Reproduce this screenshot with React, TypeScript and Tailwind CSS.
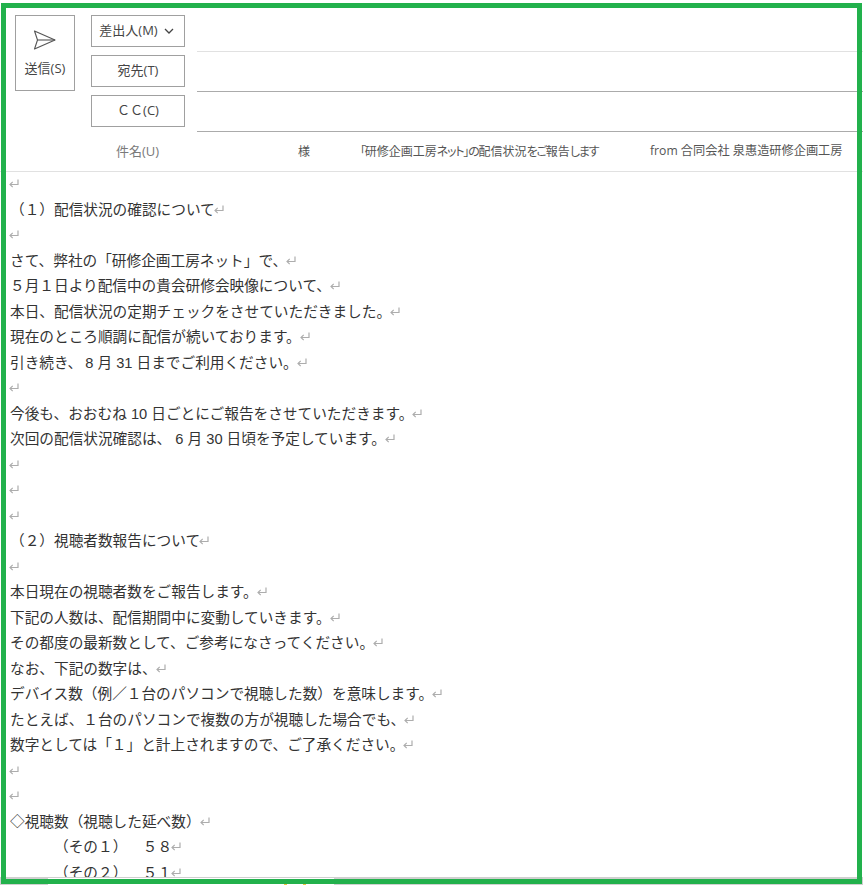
const lines: { t: string; pad?: boolean }[] = [
  { t: "" },
  { t: "（１）配信状況の確認について" },
  { t: "" },
  { t: "さて、弊社の「研修企画工房ネット」で、" },
  { t: "５月１日より配信中の貴会研修会映像について、" },
  { t: "本日、配信状況の定期チェックをさせていただきました。" },
  { t: "現在のところ順調に配信が続いております。" },
  { t: "引き続き、\u20098 月 31 日までご利用ください。" },
  { t: "" },
  { t: "今後も、おおむね 10 日ごとにご報告をさせていただきます。" },
  { t: "次回の配信状況確認は、 6 月 30 日頃を予定しています。" },
  { t: "" },
  { t: "" },
  { t: "" },
  { t: "（２）視聴者数報告について" },
  { t: "" },
  { t: "本日現在の視聴者数をご報告します。" },
  { t: "下記の人数は、配信期間中に変動していきます。" },
  { t: "その都度の最新数として、ご参考になさってください。" },
  { t: "なお、下記の数字は、" },
  { t: "デバイス数（例／１台のパソコンで視聴した数）を意味します。" },
  { t: "たとえば、１台のパソコンで複数の方が視聴した場合でも、" },
  { t: "数字としては「１」と計上されますので、ご了承ください。" },
  { t: "" },
  { t: "" },
  { t: "◇視聴数（視聴した延べ数）" },
  { t: "（その１）　  ５８", pad: true },
  { t: "（その２）　  ５１", pad: true },
];

function Mark() {
  return (
    <svg width="10" height="9" viewBox="0 0 10 9" className="-ml-[1px] inline-block align-[1px]" fill="none" stroke="#adadad" strokeWidth="1.2">
      <path d="M9 0.5V5.5H1" />
      <path d="M3.7 2.8L1 5.5L3.7 8.2" />
    </svg>
  );
}

function FieldButton({ children, className = "" }: { children: React.ReactNode; className?: string }) {
  return (
    <div className={`mt-[3px] flex h-8 w-[94px] shrink-0 items-center justify-center border border-[#a0a0a0] bg-white text-[13px] text-[#444] ${className}`}>
      {children}
    </div>
  );
}

export default function App() {
  const cjk = '"Noto Sans CJK JP", sans-serif';
  return (
    <div className="relative h-[885px] w-[863px] overflow-hidden bg-white" style={{ fontFamily: `"Open Sans", ${cjk}` }}>
      <div className="flex pl-[15px] pt-3">
        <div className="mt-[3px] flex h-[76px] w-[60px] shrink-0 flex-col items-center border border-[#a0a0a0] text-[13px] leading-4 text-[#444]">
          <svg width="24" height="20" viewBox="0 0 24 20" className="mt-[14px]" fill="none" stroke="#555" strokeWidth="1.1" strokeLinejoin="round">
            <path d="M1.5 1L22 10L1.5 19L4.5 10Z" />
            <path d="M4.5 10H22" />
          </svg>
          <span className="mt-[10px]">送信(S)</span>
        </div>
        <div className="ml-4 min-w-0 flex-1">
          <div className="flex h-10">
            <FieldButton className="pr-[3px]">
              <span>差出人(M)</span>
              <svg width="10" height="6" viewBox="0 0 10 6" className="ml-[6px]" fill="none" stroke="#444" strokeWidth="1.3">
                <path d="M1 1L5 5L9 1" />
              </svg>
            </FieldButton>
            <div className="ml-3 flex-1 border-b border-[#e1e1e1]" />
          </div>
          <div className="flex h-10">
            <FieldButton>宛先(T)</FieldButton>
            <div className="ml-3 flex-1 border-b border-[#ababab]" />
          </div>
          <div className="flex h-10">
            <FieldButton>ＣＣ(C)</FieldButton>
            <div className="ml-3 flex-1 border-b border-[#ababab]" />
          </div>
        </div>
      </div>
      <div className="flex h-10 items-center border-b border-[#e1e1e1] text-xs text-[#555]">
        <span className="ml-[116px] w-[182px] text-[13px] text-[#7a7a7a]">件名(U)</span>
        <span className="w-[62px]">様</span>
        <span className="w-[290px] [font-feature-settings:'palt']">
          <span className="tracking-[-1.2px]">「</span>研修企画工房<span className="tracking-[-1.2px]">ネット」の</span>配信状況<span className="tracking-[-1.2px]">をご</span>報告<span className="tracking-[-1.2px]">します</span>
        </span>
        <span className="text-[12.2px]">from 合同会社 泉惠造研修企画工房</span>
      </div>
      <div
        className="h-[706px] overflow-hidden border-b border-[#cfcfcf] pl-[10px] text-[14.67px] leading-[25.5px] text-[#333]"
        style={{ fontFamily: `"Liberation Sans", ${cjk}` }}
      >
        {lines.map((l, i) => (
          <div key={i} className={l.pad ? "h-[25.5px] whitespace-pre pl-[44px]" : "h-[25.5px] whitespace-pre"}>
            {l.t}
            <Mark />
          </div>
        ))}
      </div>
      <div className="flex h-[7px]">
        <div className="w-12 bg-[#d0d0d0]" />
        <div className="flex w-[286px] items-end">
          <div className="ml-[236px] h-px w-[3px] bg-[#f5c542]" />
          <div className="ml-4 h-px w-[3px] bg-[#f5c542]" />
        </div>
        <div className="flex-1 bg-[#d0d0d0]" />
      </div>
      <div className="pointer-events-none absolute bottom-[1px] left-[1px] right-[1px] top-[3px] border-[5px] border-[#22b14c]" />
    </div>
  );
}
